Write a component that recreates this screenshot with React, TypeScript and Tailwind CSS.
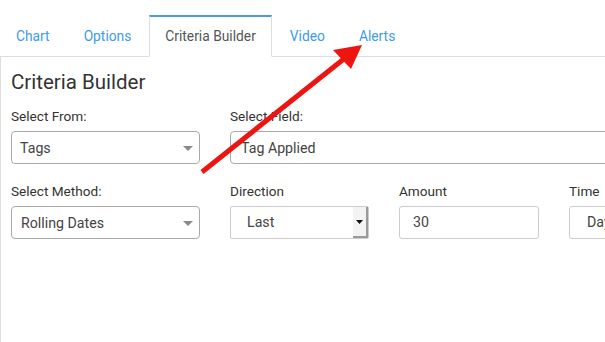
import React from "react";

const font = { fontFamily: "Roboto, 'Noto Sans', sans-serif" };

function Caret() {
  return (
    <svg width="10" height="6" viewBox="0 0 10 6" className="shrink-0">
      <polygon points="0,0 10,0 5,5" fill="#8a8a8a" />
    </svg>
  );
}

export default function App() {
  const tabs = ["Chart", "Options", "Criteria Builder", "Video", "Alerts"];
  return (
    <div className="relative w-[605px] h-[342px] overflow-hidden bg-white" style={font}>
      <div className="pt-[15px] flex border-b border-[#dddddd] h-[57px]">
        {tabs.map((t) => {
          const active = t === "Criteria Builder";
          return (
            <div
              key={t}
              className={
                active
                  ? "h-[42px] px-[15px] mr-[2px] flex items-center text-[13.8px] text-[#555] bg-white border border-[#dddddd] border-t-2 border-t-[#4a9ae0] border-b-white -mb-px"
                  : "h-[42px] px-[15px] mr-[2px] flex items-center text-[13.8px] text-[#3d9bef] border border-transparent"
              }
            >
              {t}
            </div>
          );
        })}
      </div>
      <div className="border-l border-[#dddddd] h-[285px] pl-[10px] pt-[12px]">
        <div className="text-[20.5px] leading-[26px] text-[#333]">Criteria Builder</div>
        <div className="flex gap-[30px] mt-[11px]">
          <div className="w-[189px] shrink-0">
            <div className="text-[13.6px] leading-[20px] text-[#333] mb-[5px]">Select From:</div>
            <div className="h-[33px] border border-[#a9a9a9] rounded-[4px] flex items-center justify-between pl-[8px] pr-[6px] pt-[2px] text-[14.2px] text-[#444]">
              <span>Tags</span>
              <Caret />
            </div>
          </div>
          <div className="w-[400px] shrink-0">
            <div className="text-[13.6px] leading-[20px] text-[#333] mb-[5px]">Select Field:</div>
            <div className="h-[33px] border border-[#a9a9a9] rounded-[4px] flex items-center pl-[10px] pt-[2px] text-[14.2px] text-[#444]">
              Tag Applied
            </div>
          </div>
        </div>
        <div className="flex mt-[17px]">
          <div className="w-[189px] shrink-0 mr-[30px]">
            <div className="text-[13.6px] leading-[20px] text-[#333] mb-[5px]">Select Method:</div>
            <div className="h-[33px] border border-[#a9a9a9] rounded-[4px] flex items-center justify-between pl-[9px] pr-[6px] pt-[2px] text-[14.2px] text-[#444]">
              <span>Rolling Dates</span>
              <Caret />
            </div>
          </div>
          <div className="w-[139px] shrink-0 mr-[30px]">
            <div className="text-[13.6px] leading-[20px] text-[#333] mb-[5px]">Direction</div>
            <div className="h-[33px] border border-[#cccccc] rounded-[2px] flex items-stretch text-[14.2px] text-[#444]">
              <div className="flex-1 flex items-center pl-[16px]">Last</div>
              <div className="w-[15px] bg-[#f3f3f3] border-r-2 border-b-2 border-[#9a9a9a] flex items-center justify-center">
                <svg width="7" height="4" viewBox="0 0 7 4">
                  <polygon points="0,0 7,0 3.5,4" fill="#111" />
                </svg>
              </div>
            </div>
          </div>
          <div className="w-[140px] shrink-0 mr-[30px]">
            <div className="text-[13.6px] leading-[20px] text-[#333] mb-[5px]">Amount</div>
            <div className="h-[33px] border border-[#cccccc] rounded-[3px] flex items-center pl-[13px] text-[14.2px] text-[#444]">
              30
            </div>
          </div>
          <div className="w-[100px] shrink-0">
            <div className="text-[13.6px] leading-[20px] text-[#333] mb-[5px]">Time</div>
            <div className="h-[33px] border border-[#cccccc] rounded-[3px] flex items-center pl-[17px] text-[14.2px] text-[#444]">
              Days
            </div>
          </div>
        </div>
      </div>
      <svg className="absolute left-0 top-0 pointer-events-none" width="605" height="342">
        <line x1="202" y1="172" x2="345" y2="58" stroke="#ee1410" strokeWidth="5" strokeLinecap="butt" />
        <polygon points="362,45 333,50 351,69" fill="#ee1410" />
      </svg>
    </div>
  );
}
